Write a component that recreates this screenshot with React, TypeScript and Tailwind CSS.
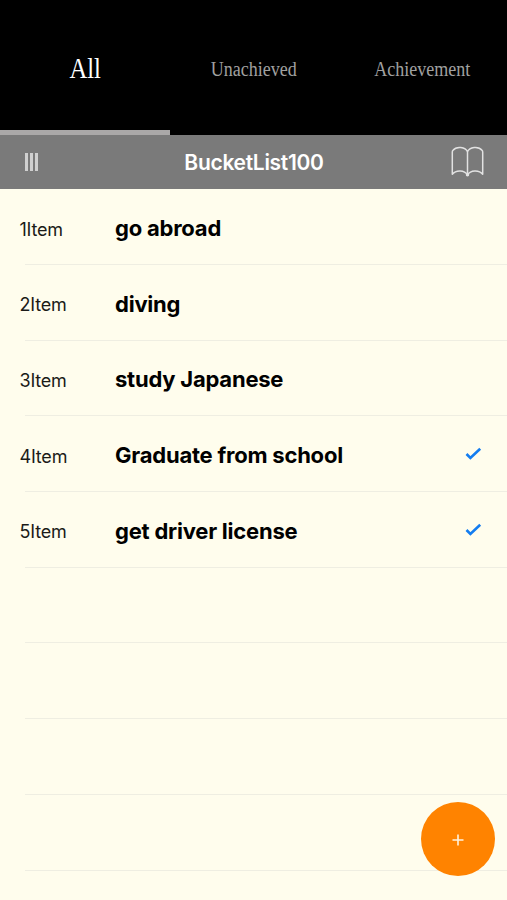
import React from "react";

type rowProps = {
  label?: string;
  title?: string;
  done?: boolean;
};

const items: rowProps[] = [
  { label: "1Item", title: "go abroad" },
  { label: "2Item", title: "diving" },
  { label: "3Item", title: "study Japanese" },
  { label: "4Item", title: "Graduate from school", done: true },
  { label: "5Item", title: "get driver license", done: true },
  {},
  {},
  {},
  {},
];

const Row: React.FC<rowProps> = ({ label, title, done }: rowProps) => {
  return (
    <li className="h-[75.7px] shrink-0">
      <div className="flex h-[75px] items-center pl-[19.5px] pr-[25px] pt-1">
        <p className="w-[95.5px] pt-px text-[18px] tracking-[-0.2px] text-[#1b1b18]">
          {label}
        </p>
        <p className="grow text-[22px] font-bold tracking-[-0.22px] text-black">
          {title}
        </p>
        {done && (
          <svg width="17" height="14" viewBox="0 0 17 14" fill="none" className="-mt-[3px]">
            <path d="M1.5 7 L5.4 11 L15.2 1.7" stroke="#147df0" strokeWidth="2.6" />
          </svg>
        )}
      </div>
      <div className="ml-[25px] h-px bg-[#efeee2]" />
    </li>
  );
};

const App: React.FC = () => {
  return (
    <div className="relative flex h-[900px] w-full flex-col overflow-hidden bg-[#fffded] font-['Inter',sans-serif]">
      <nav className="flex h-[135px] shrink-0 bg-black font-['Liberation_Serif',serif]">
        <button className="flex w-[170px] flex-col items-center justify-between">
          <span className="mt-[48px] scale-x-[0.82] text-[30px] leading-[40px] text-white">
            All
          </span>
          <span className="h-[5px] w-full bg-[#aaa8a8]" />
        </button>
        <button className="flex w-[168px] justify-center">
          <span className="mt-[49px] scale-x-[0.9] text-[20px] leading-[40px] text-[#a0a0a0]">
            Unachieved
          </span>
        </button>
        <button className="flex w-[169px] justify-center">
          <span className="mt-[49px] scale-x-[0.9] text-[20px] leading-[40px] text-[#a0a0a0]">
            Achievement
          </span>
        </button>
      </nav>
      <header className="flex h-[54px] shrink-0 items-center justify-between bg-[#7a7a7a] pl-[25px] pr-[23px]">
        <button className="flex w-[32px] gap-[2px]">
          <span className="h-[18px] w-[3px] bg-[#d0d0d0]" />
          <span className="h-[18px] w-[3px] bg-[#d0d0d0]" />
          <span className="h-[18px] w-[3px] bg-[#d0d0d0]" />
        </button>
        <h1 className="pt-px text-[21px] font-semibold tracking-[-0.3px] text-white">
          BucketList100
        </h1>
        <button>
          <svg
            width="33"
            height="32"
            viewBox="0 0 33 32"
            fill="none"
            stroke="#e2e2e2"
            strokeWidth="1.5"
            strokeLinejoin="round"
          >
            <path d="M16.5 5.8 C14.5 0.8 5.5 -0.2 2 4.2 Q1.3 5 1.3 6 V28.2 C5 23.6 13.5 24 16.5 28.8 C19.5 24 28 23.6 31.7 28.2 V6 Q31.7 5 31 4.2 C27.5 -0.2 18.5 0.8 16.5 5.8 Z" />
            <path d="M16.5 5.8 V28.8" />
            <circle cx="16.5" cy="28.8" r="1" fill="#e2e2e2" />
          </svg>
        </button>
      </header>
      <ul className="flex flex-col">
        {items.map((item, index) => (
          <Row key={index} {...item} />
        ))}
      </ul>
      <button className="absolute left-[421px] top-[802px] flex h-[74px] w-[74px] items-center justify-center rounded-full bg-[#ff8300]">
        <svg width="12" height="12" viewBox="0 0 12 12" className="mt-[2px]">
          <path d="M6 0.5 V11.5 M0.5 6 H11.5" stroke="#fff3df" strokeWidth="1.6" />
        </svg>
      </button>
    </div>
  );
};

export default App;
